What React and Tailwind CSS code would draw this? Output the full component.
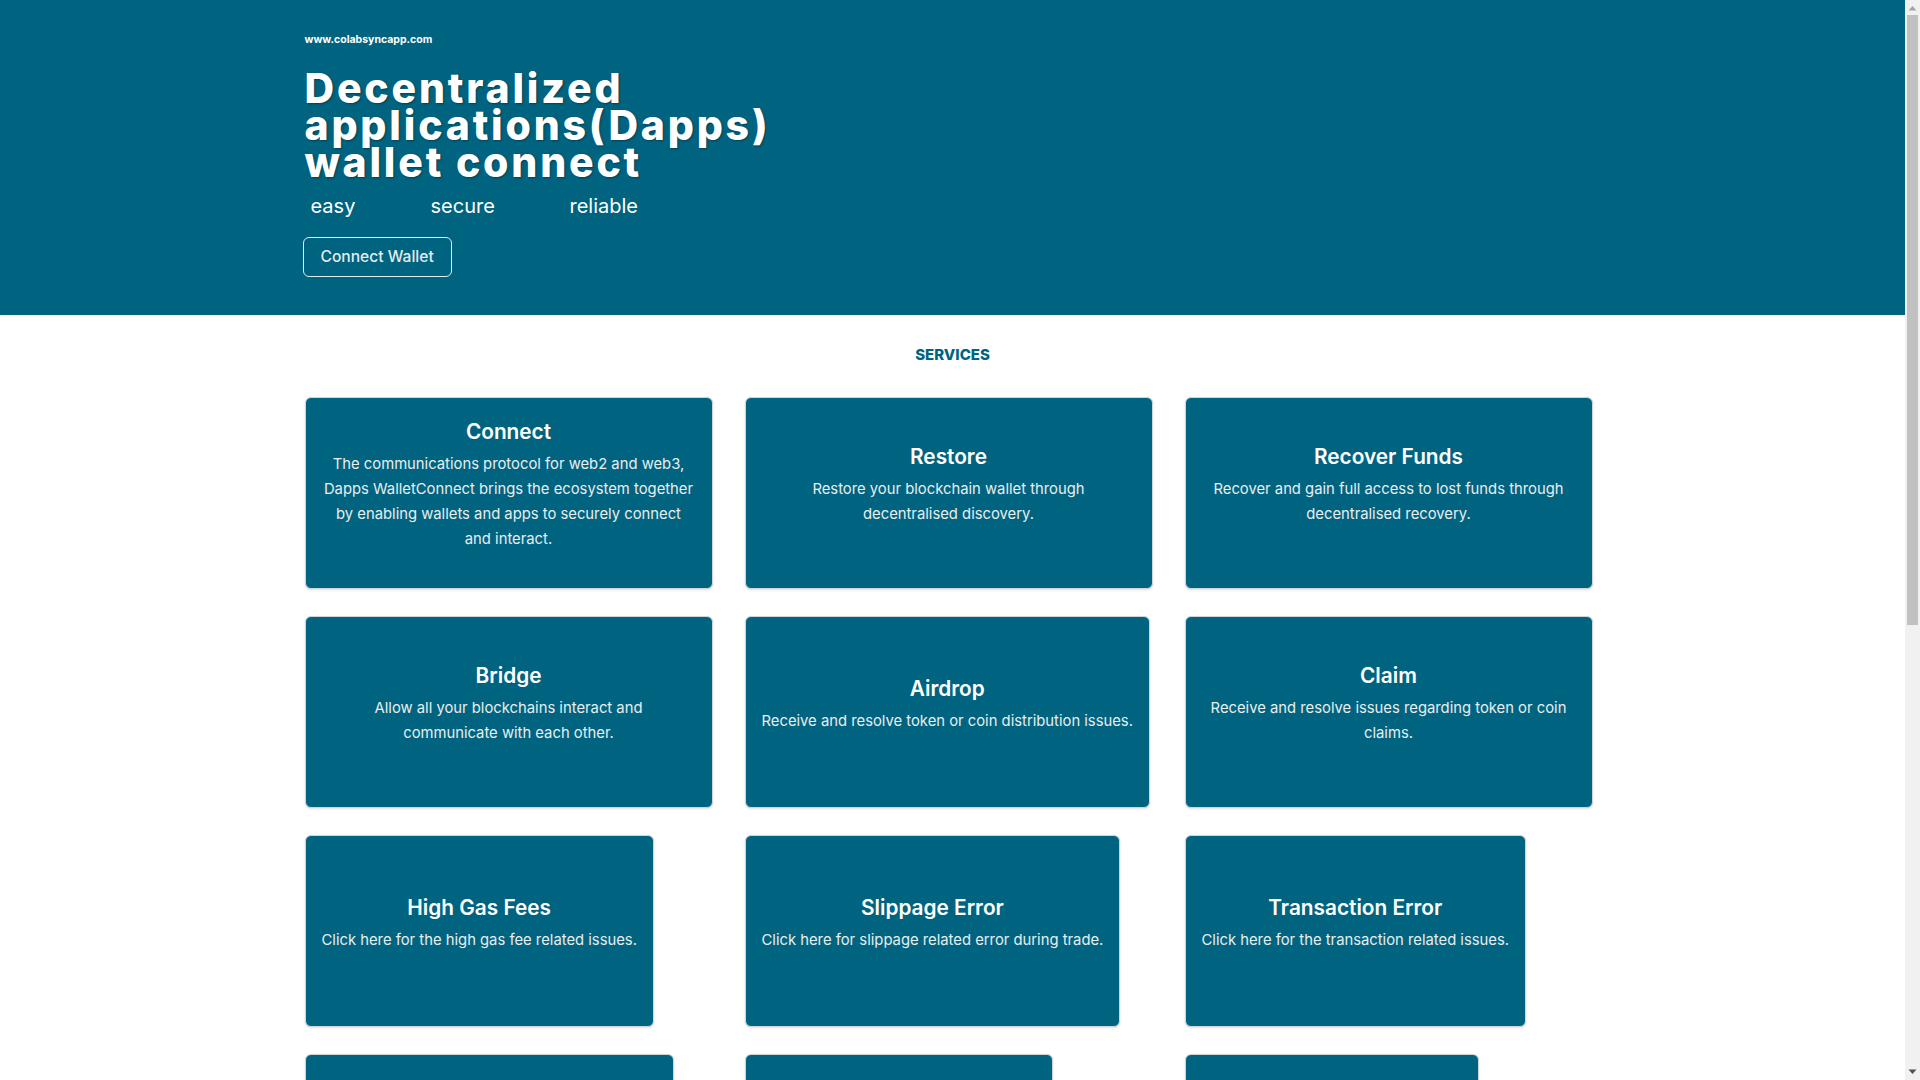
import React from 'react';

const services = [
  {
    title: 'Connect',
    text: 'The communications protocol for web2 and web3, Dapps WalletConnect brings the ecosystem together by enabling wallets and apps to securely connect and interact.',
  },
  {
    title: 'Restore',
    text: 'Restore your blockchain wallet through\ndecentralised discovery.',
    full: true,
  },
  {
    title: 'Recover Funds',
    text: 'Recover and gain full access to lost funds through decentralised recovery.',
  },
  {
    title: 'Bridge',
    text: 'Allow all your blockchains interact and\ncommunicate with each other.',
    full: true,
  },
  {
    title: 'Airdrop',
    text: 'Receive and resolve token or coin distribution issues.',
  },
  {
    title: 'Claim',
    text: 'Receive and resolve issues regarding token or coin claims.',
  },
  {
    title: 'High Gas Fees',
    text: 'Click here for the high gas fee related issues.',
  },
  {
    title: 'Slippage Error',
    text: 'Click here for slippage related error during trade.',
  },
  {
    title: 'Transaction Error',
    text: 'Click here for the transaction related issues.',
  },
  {
    title: 'Migration',
    text: 'Click here for migration related issues on wallet.',
  },
  {
    title: 'Staking',
    text: 'Click here for staking related problems.',
  },
  {
    title: 'Whitelist',
    text: 'Click here for whitelist related issues.',
  },
];

const ServiceCard = ({ title, text, full }) => {
  return (
    <div
      className={`${full ? 'w-full' : 'w-fit'} max-w-[408px] h-[192px] flex flex-col justify-center items-center text-center px-4 pb-4 bg-[#00637f] border border-[#cfd6d9] rounded-md shadow-sm cursor-pointer`}
    >
      <h3 className="text-[20.8px] leading-[28px] font-semibold text-white mb-1.5">{title}</h3>
      <p className="text-[14.8px] leading-[25px] text-[#e9eef0] whitespace-pre-line">{text}</p>
    </div>
  );
};

// the browser scrollbar seen at the right edge of the screenshot
const Scrollbar = () => (
  <aside className="sticky top-0 h-screen w-[15px] shrink-0 bg-[#f1f1f1] flex flex-col items-center">
    <svg width="9" height="6" viewBox="0 0 9 6" className="mt-[5px]">
      <path d="M0.5 5.5 L4.5 1 L8.5 5.5 Z" fill="#a3a3a3" />
    </svg>
    <div className="mt-[4px] w-[11px] h-[610px] bg-[#c1c1c1]" />
    <div className="flex-1" />
    <svg width="9" height="6" viewBox="0 0 9 6" className="mb-[5px]">
      <path d="M0.5 0.5 L4.5 5 L8.5 0.5 Z" fill="#505050" />
    </svg>
  </aside>
);

export default function App() {
  return (
    <div className="flex min-h-screen bg-white" style={{ fontFamily: 'Inter, "Noto Sans", sans-serif' }}>
      <main className="flex-1 min-w-0">
        {/* Hero */}
        <section className="bg-[#00637f] h-[315px]">
          <div className="max-w-[1296px] mx-auto pt-[32px]">
            <p className="text-[10.5px] leading-[16px] font-bold text-white">www.colabsyncapp.com</p>
            <h1 className="mt-[22px] text-[41px] leading-[37px] font-extrabold tracking-[2.8px] text-white [text-shadow:1px_1px_2px_rgba(0,0,0,0.35)]">
              Decentralized
              <br />
              applications(Dapps)
              <br />
              wallet connect
            </h1>
            <div className="mt-[11px] flex text-[20px] leading-[28px] text-white">
              <span className="pl-1.5 w-[126px]">easy</span>
              <span className="w-[139px]">secure</span>
              <span>reliable</span>
            </div>
            <button className="mt-[17px] -ml-0.5 h-[40px] px-[17px] border-[1.5px] border-[#e3ecef] rounded-md text-[15.6px] font-medium text-[#e3ecef]">
              Connect Wallet
            </button>
          </div>
        </section>

        {/* Services */}
        <section className="max-w-[1296px] mx-auto pt-[30px] pb-16">
          <h2 className="text-center text-[15px] leading-[20px] font-extrabold uppercase text-[#00637f]">Services</h2>
          <div className="mt-[32px] grid grid-cols-3 gap-x-6 gap-y-[27px]">
            {services.map((s) => (
              <ServiceCard key={s.title} title={s.title} text={s.text} full={s.full} />
            ))}
          </div>
        </section>
      </main>
      <Scrollbar />
    </div>
  );
}
